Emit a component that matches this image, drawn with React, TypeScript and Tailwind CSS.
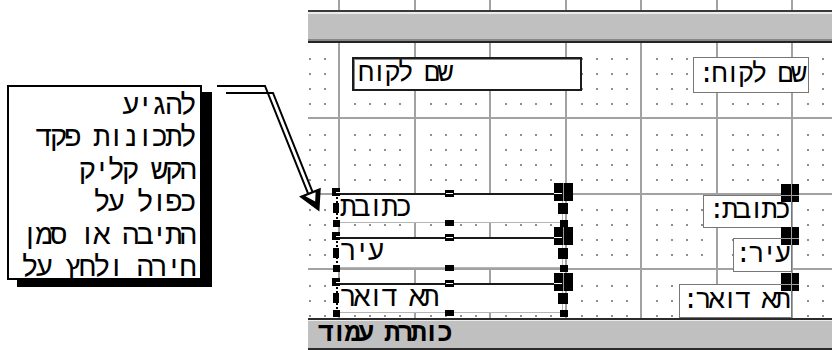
import React from "react";

// design grid of the form: 5 dots per cell
const CELL = 75.5;
const STEP = CELL / 5;
const FORM_W = 524;

const calloutLines = [
  "להגיע",
  "לתכונות פקד",
  "הקש קליק",
  "כפול על",
  "התיבה או סמן",
  "חירה ולחץ על",
];

const GridLines = ({ height, dots }: { height: number; dots: boolean }) => {
  const vLines = Array.from({ length: 7 }, (_, i) => Math.round(31 + CELL * i));
  const hLines = dots ? [75, 150.5, 226].map((y) => Math.round(y)) : [];
  const points: { x: number; y: number }[] = [];
  if (dots) {
    for (let j = 1; STEP * j < height; j++) {
      if (j % 5 === 0) continue;
      for (let k = -2; 31 + STEP * k < FORM_W; k++) {
        if (k % 5 === 0) continue;
        points.push({ x: 31 + STEP * k, y: STEP * j });
      }
    }
  }
  return (
    <svg
      width={FORM_W}
      height={height}
      className="absolute left-0 top-0"
      shapeRendering="crispEdges"
    >
      {points.map((p, i) => (
        <rect
          key={i}
          x={Math.round(p.x)}
          y={Math.round(p.y)}
          width={1.5}
          height={1.5}
          fill="#8e8e8e"
        />
      ))}
      {vLines.map((x) => (
        <rect key={x} x={x - 1} y={0} width={2} height={height} fill="#a2a2a2" />
      ))}
      {hLines.map((y) => (
        <rect key={y} x={0} y={y - 1} width={FORM_W} height={2} fill="#a2a2a2" />
      ))}
    </svg>
  );
};

const boxes = [
  { text: "כתובת", y0: 150, y1: 180 },
  { text: "עיר", y0: 194, y1: 225 },
  { text: "תא דואר", y0: 240, y1: 270 },
];

const labelTops = [152, 195, 241];

const Handles = () => (
  <svg width={FORM_W} height={275} className="absolute left-0 top-0 pointer-events-none">
    {boxes.map(({ y0, y1 }) => {
      const mid = Math.round((y0 + y1) / 2);
      return (
        <g key={y0} shapeRendering="crispEdges">
          <line x1={28.5} y1={y0} x2={28.5} y2={y1} stroke="#000" strokeWidth={2} strokeDasharray="2 2" />
          <rect x={24} y={y0 - 5} width={8} height={8} fill="#000" />
          <rect x={28} y={y0 - 1} width={4} height={1} fill="#fff" />
          <rect x={25} y={mid - 5} width={6} height={10} fill="#000" />
          <rect x={25} y={y1 - 3} width={7} height={7} fill="#000" />
          <rect x={137} y={y0 - 3} width={9} height={7} fill="#000" />
          <rect x={138} y={y0} width={7} height={1} fill="#fff" />
          <rect x={137} y={y1 - 3} width={9} height={6} fill="#000" />
          <rect x={246} y={y0 - 10} width={19} height={18} fill="#000" />
          <rect x={246} y={y0} width={8} height={1} fill="#fff" />
          <rect x={255} y={y0 - 10} width={1} height={18} fill="#9a9a9a" />
          <rect x={250} y={mid - 5} width={10} height={11} fill="#000" />
          <rect x={252} y={y1 - 3} width={8} height={7} fill="#000" />
        </g>
      );
    })}
    {labelTops.map((t) => (
      <g key={t} shapeRendering="crispEdges">
        <rect x={473} y={t - 11} width={18} height={18} fill="#000" />
        <rect x={483} y={t - 11} width={1} height={18} fill="#a0a0a0" />
        <rect x={473} y={t} width={18} height={1} fill="#a0a0a0" />
      </g>
    ))}
  </svg>
);

const Arrow = () => (
  <svg width={832} height={350} className="absolute left-0 top-0 pointer-events-none">
    <polyline
      points="217,86 265,86 308.2,193.9"
      fill="none"
      stroke="#000"
      strokeWidth={2}
    />
    <polyline
      points="226,93 273,93 312.6,192.1"
      fill="none"
      stroke="#000"
      strokeWidth={2}
    />
    <polygon
      points="301.1,196.7 319.7,189.3 318.5,209.5"
      fill="#000"
      stroke="#000"
      strokeWidth={2}
    />
    <polygon points="305.5,196.2 315.6,192.2 315.2,201.5" fill="#fff" />
  </svg>
);

export default function App() {
  return (
    <div className="relative w-[832px] h-[350px] overflow-hidden bg-white flex font-['Liberation_Mono','DejaVu_Sans_Mono',monospace] text-black">
      <div className="w-[308px] shrink-0 pt-[85px] pl-[7px]">
        <div
          dir="rtl"
          className="w-[195px] h-[195px] border-2 border-black bg-white shadow-[10px_7px_0_#000] overflow-hidden pr-[6px] pt-[4px] text-[29px] tracking-[-3px] leading-[32.4px]"
        >
          {calloutLines.map((line) => (
            <div key={line} className="whitespace-nowrap">
              {line}
            </div>
          ))}
        </div>
      </div>

      <div className="w-[524px] shrink-0 flex flex-col">
        <div className="relative h-[10px]">
          <GridLines height={10} dots={false} />
        </div>

        <div className="h-[33px] bg-[#c0c0c0] border-t-2 border-t-[#3a3a3a] border-b-2 border-b-[#242424] shadow-[inset_0_2px_0_#ececec,inset_0_-2px_0_#888888]" />

        <div className="relative h-[275px] text-[27px] tracking-[-3px]">
          <GridLines height={275} dots />

          <div className="absolute left-[44px] top-[14px] w-[230px] h-[34px] border-2 border-[#1c1c1c] bg-white shadow-[inset_1px_1px_0_#8a8a8a] flex items-center pl-[4px]">
            <span dir="rtl">שם לקוח</span>
          </div>

          <div className="absolute left-[385px] top-[14px] w-[116px] h-[36px] border border-[#777] bg-white flex items-center justify-end pr-[4px]">
            <span dir="rtl">שם לקוח:</span>
          </div>

          <div className="absolute left-[29px] top-[150px] w-[226px] h-[30px] bg-white border-t-2 border-t-[#1a1a1a] border-b border-b-[#b5b5b5] border-r border-r-[#b5b5b5] flex items-center pl-[3px] text-[28px]">
            <span dir="rtl">כתובת</span>
          </div>
          <div className="absolute left-[29px] top-[194px] w-[226px] h-[31px] bg-white border-t-2 border-t-[#1a1a1a] border-b border-b-[#b5b5b5] border-r border-r-[#b5b5b5] flex items-center pl-[3px] text-[28px]">
            <span dir="rtl">עיר</span>
          </div>
          <div className="absolute left-[29px] top-[240px] w-[226px] h-[30px] bg-white border-t-2 border-t-[#1a1a1a] border-b border-b-[#b5b5b5] border-r border-r-[#b5b5b5] flex items-center pl-[3px] text-[28px]">
            <span dir="rtl">תא דואר</span>
          </div>

          <div className="absolute left-[395px] top-[152px] w-[89px] h-[33px] border border-[#777] bg-white flex items-center justify-end pr-[3px]">
            <span dir="rtl">כתובת:</span>
          </div>
          <div className="absolute left-[425px] top-[195px] w-[59px] h-[34px] border border-[#777] bg-white flex items-center justify-end pr-[3px]">
            <span dir="rtl">עיר:</span>
          </div>
          <div className="absolute left-[371px] top-[241px] w-[113px] h-[34px] border border-[#777] bg-white flex items-center justify-end pr-[3px]">
            <span dir="rtl">תא דואר:</span>
          </div>

          <Handles />
        </div>

        <div className="h-[32px] bg-[#c0c0c0] border-t-2 border-t-[#2b2b2b] border-b-2 border-b-[#2b2b2b] shadow-[inset_0_1px_0_#ececec] flex items-center pl-[10px]">
          <span dir="rtl" className="text-[27px] tracking-[-3px] font-bold leading-none">
            כותרת עמוד
          </span>
        </div>
      </div>

      <Arrow />
    </div>
  );
}
